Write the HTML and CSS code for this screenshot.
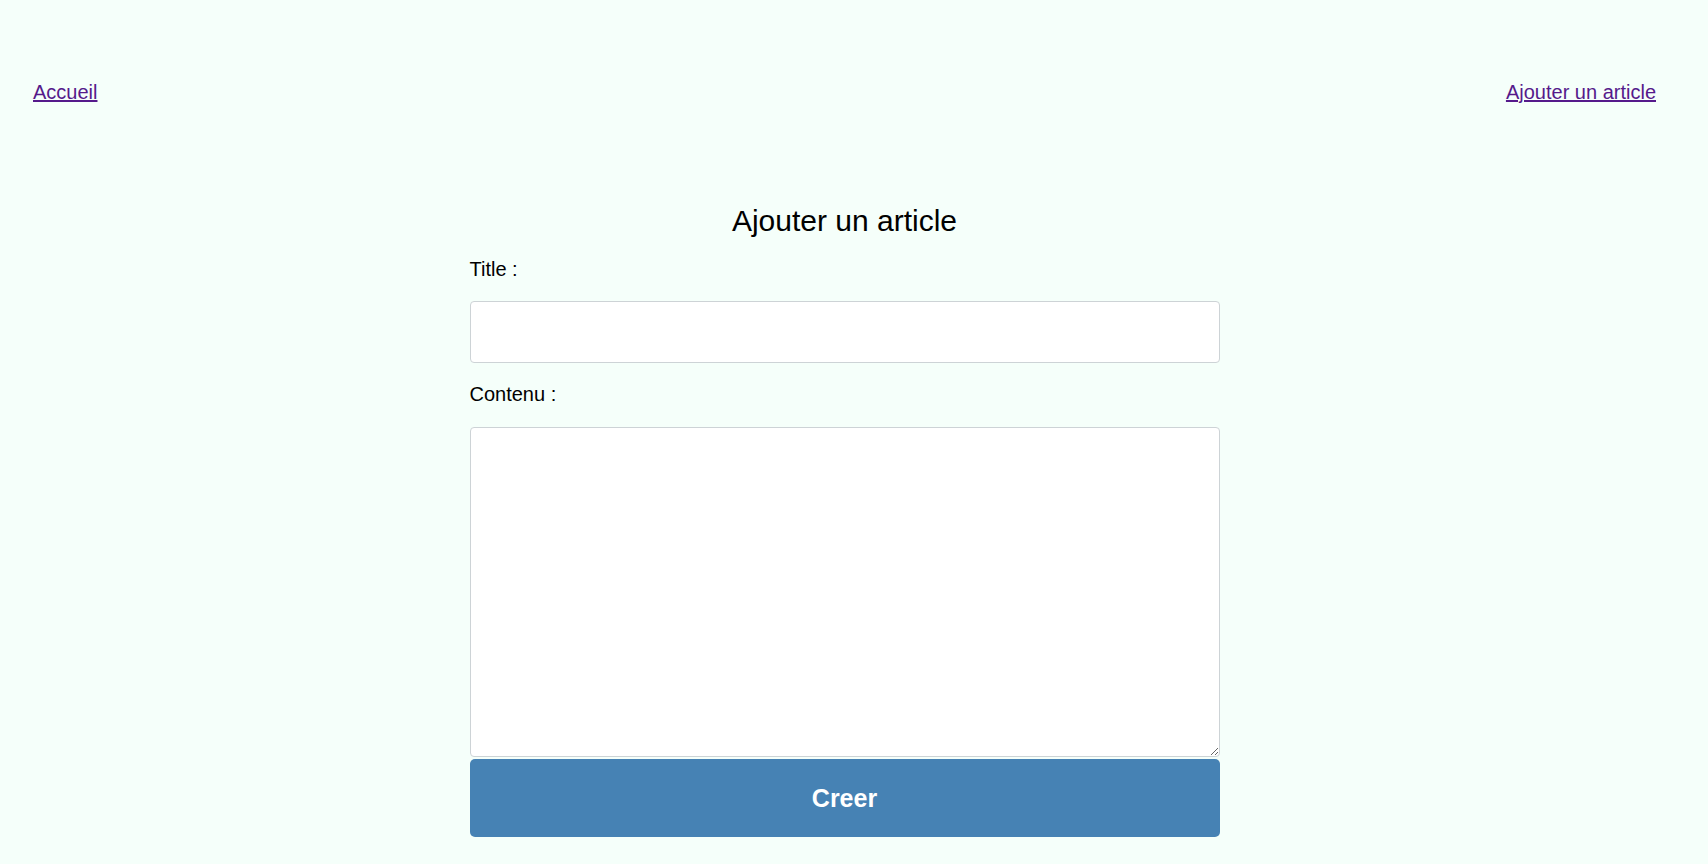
FILE: index.html
```html
<!DOCTYPE html>
<html lang="fr">
<head>
<meta charset="utf-8">
<title>Ajouter un article</title>
<link rel="stylesheet" href="styles.css">
</head>
<body>
<div class="page">
  <nav class="nav">
    <a href="#" class="nav-link">Accueil</a>
    <a href="#" class="nav-link">Ajouter un article</a>
  </nav>
  <main class="content">
    <h1 class="heading">Ajouter un article</h1>
    <form class="form">
      <label class="label" for="title">Title :</label>
      <input class="field" type="text" id="title" name="title">
      <label class="label label-content" for="content">Contenu :</label>
      <textarea class="area" id="content" name="content"></textarea>
      <button class="submit" type="submit">Creer</button>
    </form>
  </main>
</div>
</body>
</html>
```

FILE: styles.css
```css
html, body {
  margin: 0;
  padding: 0;
  background: #f5fffa;
  font-family: "Liberation Sans", Arial, sans-serif;
  color: #000;
}

.page {
  width: calc(100% - 19px);
}

.nav {
  display: flex;
  justify-content: space-between;
  padding: 81px 33px 0 33px;
}

.nav-link {
  font-size: 20px;
  line-height: 23px;
  color: #551a8b;
  text-decoration: underline;
}

.content {
  width: 750px;
  margin: 0 auto;
}

.heading {
  margin: 100px 0 0;
  font-size: 30px;
  line-height: 34px;
  font-weight: normal;
  text-align: center;
}

.form {
  display: flex;
  flex-direction: column;
}

.label {
  font-size: 20px;
  line-height: 23px;
  margin-top: 20px;
}

.field {
  box-sizing: border-box;
  margin-top: 20px;
  height: 62px;
  width: 100%;
  border: 1px solid #cdd3d6;
  border-radius: 4px;
  background: #fff;
  font-size: 18px;
  padding: 0 12px;
}

.area {
  box-sizing: border-box;
  display: block;
  margin-top: 21px;
  height: 330px;
  width: 100%;
  border: 1px solid #cdd3d6;
  border-radius: 4px;
  background: #fff;
  font-size: 18px;
  padding: 12px;
}

.submit {
  margin-top: 2px;
  height: 78px;
  width: 100%;
  border: none;
  border-radius: 5px;
  background: #4682b4;
  color: #fff;
  font-family: "Liberation Sans", Arial, sans-serif;
  font-size: 25px;
  font-weight: bold;
}
```
